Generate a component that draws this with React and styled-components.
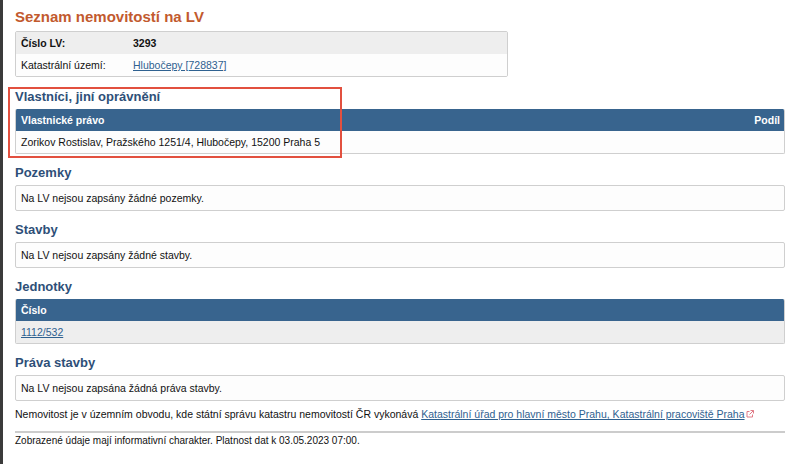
import styled, { createGlobalStyle } from "styled-components";

const GlobalStyle = createGlobalStyle`
  html, body {
    margin: 0;
    padding: 0;
    background: #fff;
  }
  body {
    font-family: "Liberation Sans", Arial, Helvetica, sans-serif;
    font-size: 10.5px;
    color: #111;
  }
`;

const Page = styled.div`
  position: relative;
  min-height: 464px;
  box-sizing: border-box;
  border-left: 3px solid #3b3b3b;
  padding: 7px 15px 0 12px;
`;

const Title = styled.h1`
  margin: 0;
  font-size: 15px;
  line-height: 20px;
  font-weight: bold;
  color: #c25a2e;
`;

const InfoBox = styled.div`
  width: 493px;
  box-sizing: border-box;
  margin-top: 4px;
  border: 1px solid #cfcfcf;
  border-radius: 2px;
  overflow: hidden;
`;

const InfoRow = styled.div`
  display: grid;
  grid-template-columns: 112px 1fr;
  height: 22px;
  align-items: center;
  padding-left: 5px;
  background: ${(p) => (p.$shaded ? "#eeeeee" : "#fdfdfd")};
  font-weight: ${(p) => (p.$bold ? "bold" : "normal")};
`;

const Link = styled.a`
  color: #2f6190;
  text-decoration: underline;
  cursor: pointer;
`;

const Heading = styled.h2`
  margin: ${(p) => p.$top || 10}px 0 3px;
  font-size: 13px;
  line-height: 18px;
  font-weight: bold;
  color: #2e4f78;
`;

const Table = styled.div`
  border: 1px solid #cfcfcf;
  border-top: none;
  border-radius: 2px;
  overflow: hidden;
`;

const HeadRow = styled.div`
  display: flex;
  justify-content: space-between;
  align-items: center;
  height: 22px;
  padding: 0 4px 0 5px;
  background: #38648e;
  color: #fff;
  font-weight: bold;
`;

const BodyRow = styled.div`
  display: flex;
  align-items: center;
  height: 22px;
  padding: 0 5px;
  background: ${(p) => (p.$shaded ? "#eeeeee" : "#fdfdfd")};
`;

const Box = styled.div`
  display: flex;
  align-items: center;
  height: 24px;
  padding: 0 5px;
  border: 1px solid #cfcfcf;
  border-radius: 2px;
  background: #fdfdfd;
`;

const Note = styled.p`
  margin: 6px 0 0;
  line-height: 14px;
  white-space: nowrap;
`;

const ExtIcon = styled.svg`
  width: 8px;
  height: 8px;
  margin-left: 1px;
  vertical-align: 0px;
`;

const Rule = styled.hr`
  margin: 10px 0 0;
  border: none;
  border-top: 2px solid #cccccc;
`;

const Footer = styled.p`
  margin: 1px 0 0;
  font-size: 10px;
  line-height: 14px;
`;

const Marker = styled.div`
  position: absolute;
  left: 5px;
  top: 87px;
  width: 334px;
  height: 71px;
  box-sizing: border-box;
  border: 2px solid #e2503f;
  pointer-events: none;
`;

export default function App() {
  return (
    <>
      <GlobalStyle />
      <Page>
        <Title>Seznam nemovitostí na LV</Title>
        <InfoBox>
          <InfoRow $shaded $bold>
            <span>Číslo LV:</span>
            <span>3293</span>
          </InfoRow>
          <InfoRow>
            <span>Katastrální území:</span>
            <span>
              <Link>Hlubočepy [728837]</Link>
            </span>
          </InfoRow>
        </InfoBox>

        <Heading $top={11}>Vlastníci, jiní oprávnění</Heading>
        <Table>
          <HeadRow>
            <span>Vlastnické právo</span>
            <span>Podíl</span>
          </HeadRow>
          <BodyRow>Zorikov Rostislav, Pražského 1251/4, Hlubočepy, 15200 Praha 5</BodyRow>
        </Table>

        <Heading>Pozemky</Heading>
        <Box>Na LV nejsou zapsány žádné pozemky.</Box>

        <Heading>Stavby</Heading>
        <Box>Na LV nejsou zapsány žádné stavby.</Box>

        <Heading>Jednotky</Heading>
        <Table>
          <HeadRow>
            <span>Číslo</span>
          </HeadRow>
          <BodyRow $shaded>
            <Link>1112/532</Link>
          </BodyRow>
        </Table>

        <Heading>Práva stavby</Heading>
        <Box>Na LV nejsou zapsána žádná práva stavby.</Box>

        <Note>
          Nemovitost je v územním obvodu, kde státní správu katastru nemovitostí ČR vykonává{" "}
          <Link>Katastrální úřad pro hlavní město Prahu, Katastrální pracoviště Praha</Link>
          <ExtIcon viewBox="0 0 8 8">
            <path d="M3.5 1.5H1v5.5h5.5V4.5" fill="none" stroke="#e07a86" strokeWidth="1" />
            <path d="M4.5 0.5h3v3M7.5 0.5L3.5 4.5" fill="none" stroke="#e07a86" strokeWidth="1" />
          </ExtIcon>
        </Note>
        <Rule />
        <Footer>Zobrazené údaje mají informativní charakter. Platnost dat k 03.05.2023 07:00.</Footer>

        <Marker />
      </Page>
    </>
  );
}
